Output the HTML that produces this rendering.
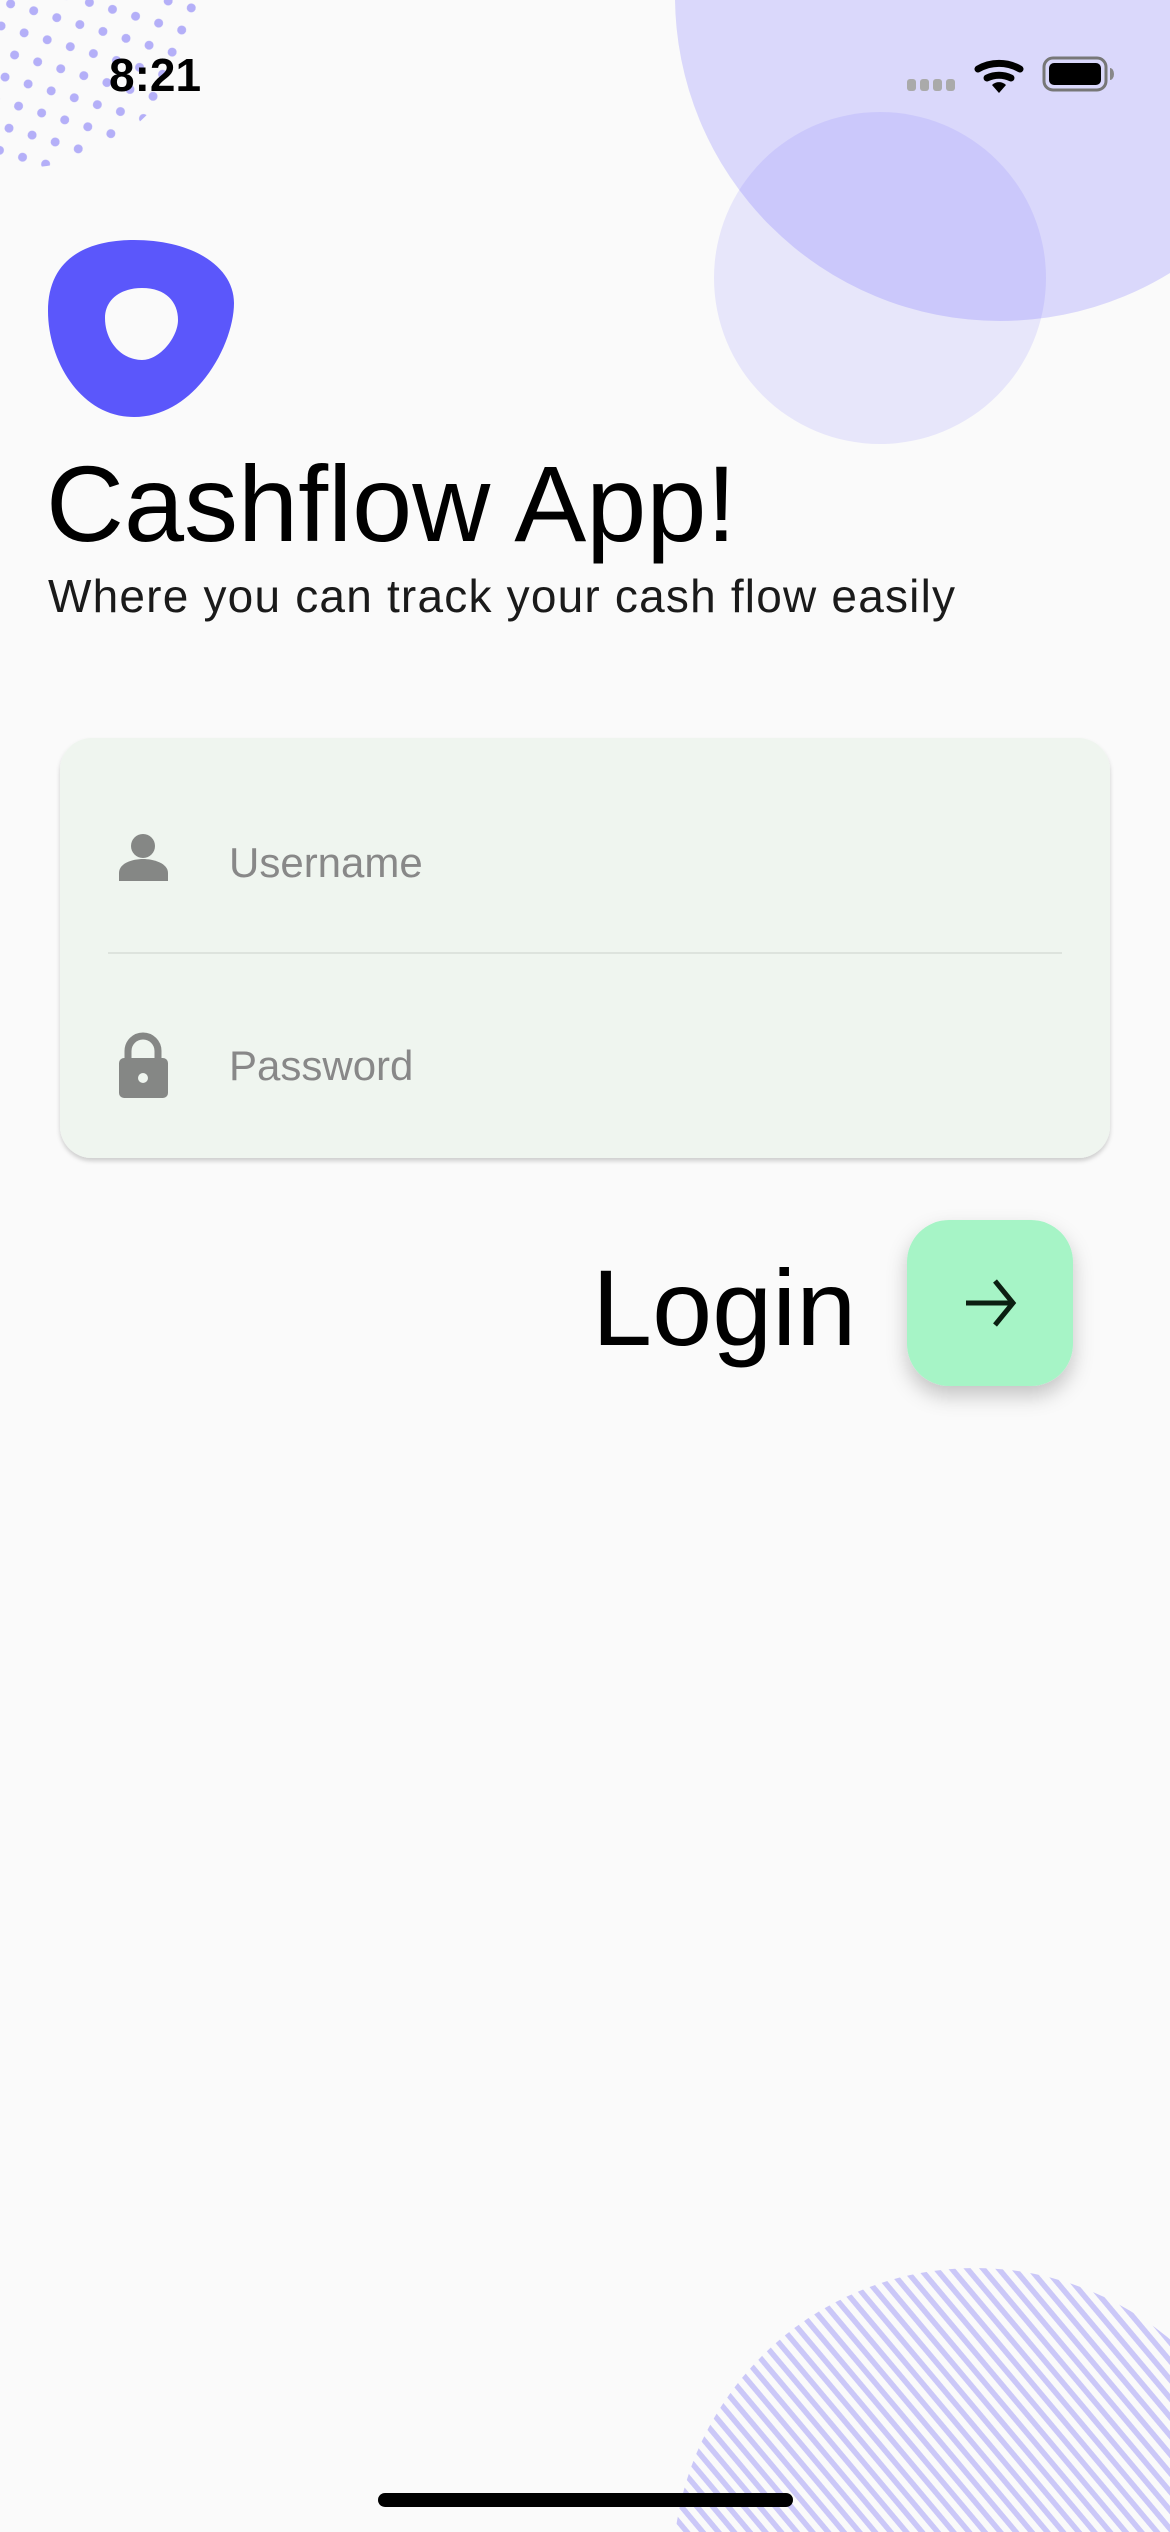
<!DOCTYPE html>
<html><head><meta charset="utf-8"><style>
html,body{margin:0;padding:0;overflow:hidden}
body{width:1170px;height:2532px;background:#fafafa;position:relative;overflow:hidden;font-family:"Liberation Sans",sans-serif}
.t{position:absolute;line-height:1;white-space:nowrap}
</style></head><body>
<svg width="1170" height="2532" style="position:absolute;left:0;top:0;display:block">
<defs>
<pattern id="dots" width="36" height="32" patternUnits="userSpaceOnUse" patternTransform="rotate(-25)">
<circle cx="8" cy="8" r="4.5" fill="#b4aff8"/>
<circle cx="26" cy="24" r="4.5" fill="#b4aff8"/>
</pattern>
<pattern id="stripes" width="12" height="12" patternUnits="userSpaceOnUse" patternTransform="rotate(-40)">
<rect x="0" y="0" width="5.5" height="12" fill="#cbc8f8"/>
</pattern>
<clipPath id="dc"><circle cx="20" cy="-10" r="178"/></clipPath>
<filter id="sh" x="-30%" y="-30%" width="160%" height="170%"><feDropShadow dx="0" dy="10" stdDeviation="10" flood-color="#000" flood-opacity="0.22"/></filter>
<filter id="sh2" x="-10%" y="-10%" width="120%" height="130%"><feDropShadow dx="0" dy="3" stdDeviation="2" flood-color="#000" flood-opacity="0.18"/></filter>
</defs>
<rect x="0" y="0" width="200" height="180" fill="url(#dots)" clip-path="url(#dc)"/>
<circle cx="1000" cy="-4" r="325" fill="rgb(99,91,255)" fill-opacity="0.21"/>
<circle cx="880" cy="278" r="166" fill="rgb(99,91,255)" fill-opacity="0.12"/>
<circle cx="975" cy="2570" r="302" fill="url(#stripes)"/>
<path fill="#5b57fb" fill-rule="evenodd" d="M134,240 C195,240 234,268 234,303 C234,345 195,417 134,417 C80,417 48,360 48,311 C48,262 82,240 134,240 Z M142,288 C166,288 178,302 178,320 C178,337 160,360 142,360 C122,360 105,342 105,318 C105,300 120,288 142,288 Z"/>
<g fill="#aaa"><rect x="907" y="79" width="9" height="12" rx="3"/><rect x="920" y="79" width="9" height="12" rx="3"/><rect x="933" y="79" width="9" height="12" rx="3"/><rect x="946" y="79" width="9" height="12" rx="3"/></g>
<g fill="none" stroke="#000" stroke-width="7" stroke-linecap="round">
<path d="M978,69 A42,42 0 0 1 1020,69"/>
<path d="M987,78 A28,28 0 0 1 1011,78"/>
</g>
<path d="M992,85 L999,93 L1006,85 A10,10 0 0 0 992,85Z" fill="#000"/>
<rect x="1044" y="58" width="62" height="32" rx="9" fill="none" stroke="#777" stroke-width="3"/>
<rect x="1049" y="63" width="52" height="22" rx="5" fill="#000"/>
<path d="M1110,68 a4,6 0 0 1 0,12 z" fill="#888"/>
<rect x="60" y="738" width="1050" height="420" rx="32" fill="#eff5ef" filter="url(#sh2)"/>
<rect x="108" y="952" width="954" height="2" fill="#dde3dd"/>
<circle cx="143" cy="846" r="12" fill="#858785"/>
<path d="M119,881 L119,873 C119,863 133,859 143,859 C153,859 168,863 168,873 L168,881 Z" fill="#858785"/>
<path d="M128,1060 L128,1051 A15,15 0 0 1 158,1051 L158,1060" fill="none" stroke="#858785" stroke-width="7"/>
<rect x="119" y="1058" width="49" height="40" rx="5" fill="#858785"/>
<circle cx="143" cy="1078" r="5" fill="#eff5ef"/>
<rect x="907" y="1220" width="166" height="166" rx="42" fill="#a6f4c6" filter="url(#sh)"/>
<path d="M966,1303 L1012,1303 M995,1281 L1013,1303 L995,1325" fill="none" stroke="#0c1f12" stroke-width="5"/>
<rect x="378" y="2493" width="415" height="14" rx="7" fill="#000"/>
</svg>
<div class="t" style="left:109px;top:52px;font-size:46px;font-weight:bold;color:#000">8:21</div>
<div class="t" style="left:46px;top:450px;font-size:108px;color:#000">Cashflow App!</div>
<div class="t" style="left:48px;top:573px;font-size:46px;color:#1a1a1a;letter-spacing:1.2px">Where you can track your cash flow easily</div>
<div class="t" style="left:229px;top:842px;font-size:42px;color:#888">Username</div>
<div class="t" style="left:229px;top:1045px;font-size:42px;color:#888">Password</div>
<div class="t" style="left:592px;top:1254px;font-size:108px;color:#000">Login</div>
</body></html>
